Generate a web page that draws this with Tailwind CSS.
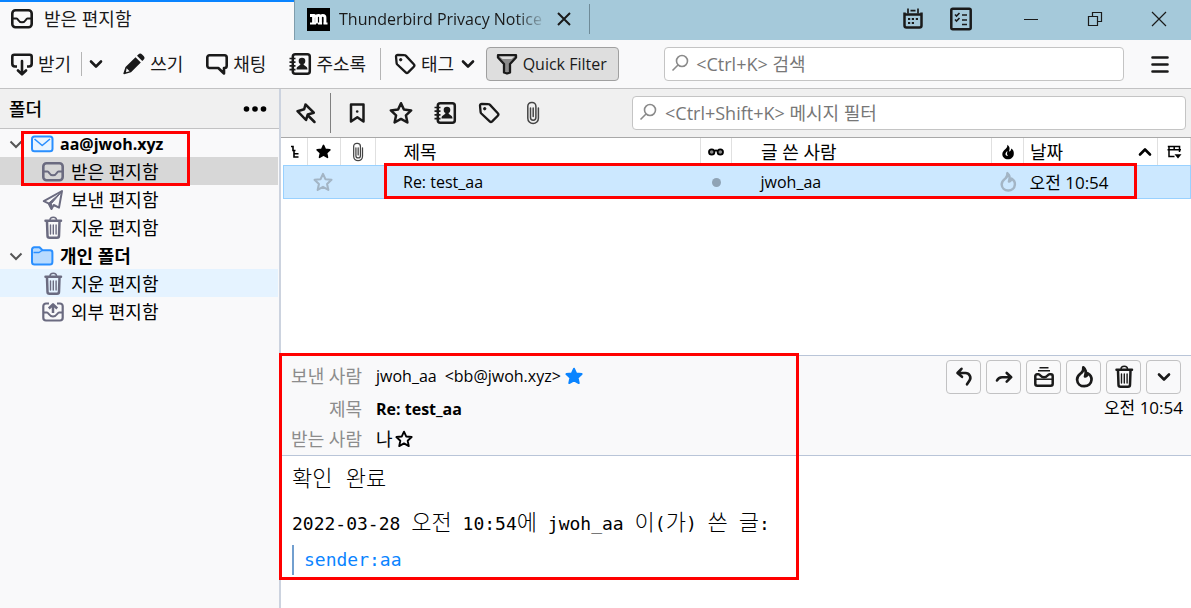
<!DOCTYPE html>
<html lang="ko">

<head>
	<title>받은 편지함</title>
	<meta charset="UTF-8" />
	<meta name="viewport" content="width=device-width, initial-scale=1" />
	<script src="https://cdn.jsdelivr.net/npm/@tailwindcss/browser@4"></script>
</head>

<body class="min-h-screen flex flex-col bg-white text-black text-lg leading-6 font-['Open_Sans','Noto_Sans_CJK_KR',sans-serif]">

	<!-- Icon sprite -->
	<svg class="hidden" aria-hidden="true">
		<symbol id="inbox" viewBox="0 0 24 24" fill="none" stroke="currentColor" stroke-width="2.6" stroke-linejoin="round">
			<rect x="2.3" y="3.3" width="19.4" height="16.9" rx="3.2" />
			<path d="M2.5 11.500h4c2 0 1.500 3.800 5.500 3.800s3.500-3.800 5.500-3.800h4" stroke-width="2" />
		</symbol>
		<symbol id="download" viewBox="0 0 24 24" fill="none" stroke="currentColor" stroke-width="2.6" stroke-linejoin="round" stroke-linecap="round">
			<path d="M7 14.500H5a2.700 2.700 0 0 1-2.700-2.700V4.800a2 2 0 0 1 2-2h15.400a2 2 0 0 1 2 2v7a2.700 2.700 0 0 1-2.700 2.700h-2" stroke-linecap="butt" />
			<path d="M12 9v13M8 18.500l4 3.800 4-3.800" />
		</symbol>
		<symbol id="chevron" viewBox="0 0 16 16" fill="none" stroke="currentColor" stroke-width="2.600" stroke-linecap="round" stroke-linejoin="round">
			<path d="M3 5.500l5 5 5-5" />
		</symbol>
		<symbol id="twisty" viewBox="0 0 16 16" fill="none" stroke="currentColor" stroke-width="2">
			<path d="M2.500 5.500l5.500 5.500L13.500 5.500" />
		</symbol>
		<symbol id="pencil" viewBox="0 0 24 24" fill="currentColor">
			<path d="M13.500 5.200l5.300 5.300L9 20.300 2.200 22.200c-.6.100-1-.4-.8-.9L3.500 15z" />
			<path d="M15 3.700l1.300-1.200a2.700 2.700 0 0 1 3.800 0l1.500 1.500a2.700 2.700 0 0 1 0 3.800L20.300 9z" />
			<path d="M4.600 16.300l3 3-3.600 1z" fill="#f9f9fa" />
		</symbol>
		<symbol id="chat" viewBox="0 0 24 24" fill="none" stroke="currentColor" stroke-width="2.600" stroke-linejoin="round">
			<path d="M4.500 3.300h15a2.200 2.200 0 0 1 2.200 2.200v8.300a2.200 2.200 0 0 1-2.200 2.200H19v5.500L13.300 16H4.500a2.200 2.200 0 0 1-2.200-2.200V5.500a2.200 2.200 0 0 1 2.200-2.200z" />
		</symbol>
		<symbol id="book" viewBox="0 0 24 24" fill="none" stroke="currentColor">
			<rect x="4.800" y="2.300" width="17" height="19.400" rx="2.500" stroke-width="2.500" />
			<path d="M1.500 6.500h6M1.500 10.200h6M1.500 13.900h6M1.500 17.600h6" stroke-width="1.700" />
			<circle cx="14" cy="9" r="3.300" fill="currentColor" stroke="none" />
			<path d="M8.500 17.500c0-4 3.500-3 4-5.500h3c.5 2.500 4 1.500 4 5.500z" fill="currentColor" stroke="none" />
		</symbol>
		<symbol id="tag" viewBox="0 0 24 24" fill="none" stroke="currentColor" stroke-width="2.300" stroke-linejoin="round">
			<path d="M3 4.500A1.700 1.700 0 0 1 4.700 2.800l6.800.4c.6 0 1.100.3 1.500.7l7.800 8.300a1.800 1.800 0 0 1 0 2.500l-5.600 5.700a1.800 1.800 0 0 1-2.500 0l-8.400-7.900c-.4-.4-.7-.9-.7-1.500z" />
			<circle cx="7.700" cy="7.700" r="1.200" fill="currentColor" stroke-width="1" />
		</symbol>
		<symbol id="funnel" viewBox="0 0 24 24" stroke="currentColor" stroke-width="2.300" stroke-linejoin="round">
			<path d="M3 3.200h18v2.300L15 12v8.500L12 21.500 9 20.500V12L3 5.500z" fill="#8c8c8c" />
			<path d="M4.500 4.500h15L16.500 7h-9z" fill="#ddd" stroke="none" />
		</symbol>
		<symbol id="search" viewBox="0 0 20 20" fill="none" stroke="currentColor" stroke-width="1.600">
			<circle cx="11" cy="7" r="5.500" />
			<path d="M7 11L1.500 16.500" />
		</symbol>
		<symbol id="pin" viewBox="0 0 24 24" fill="none" stroke="currentColor" stroke-width="2.500" stroke-linejoin="round" stroke-linecap="round">
			<path d="M11.500 3.500l-1.300 4.700-6.700 2 8.500 8.800 1.800-5.500 6-1.800z" />
			<path d="M14 14.500l6.500 6.500" />
		</symbol>
		<symbol id="bookmark" viewBox="0 0 24 24" fill="none" stroke="currentColor" stroke-width="2.500" stroke-linejoin="round">
			<path d="M6 3.500h12.500v17l-6.200-4.300L6 20.500z" />
			<circle cx="12.200" cy="10.500" r="1.300" fill="currentColor" stroke="none" />
		</symbol>
		<symbol id="star" viewBox="0 0 24 24" stroke="currentColor" stroke-width="2.500" stroke-linejoin="round">
			<path d="M12 2.200l2.900 6.400 7.300.8-5.300 4.900 1.500 7.200L12 17.900l-6.400 3.600 1.500-7.200-5.300-4.900 7.300-.8z" />
		</symbol>
		<symbol id="clip" viewBox="0 0 24 24" fill="none" stroke="currentColor" stroke-width="1.500" stroke-linecap="round">
			<path d="M9.500 7v9.500a2.700 2.700 0 0 0 5.400 0V5.200a3.700 3.700 0 0 0-3.700-3.700h-.7a3.700 3.700 0 0 0-3.700 3.700v12a5.300 5.300 0 0 0 10.600 0V7" />
			<path d="M12.200 7v8.500" />
		</symbol>
		<symbol id="flame" viewBox="0 0 24 24" fill="none" stroke="currentColor" stroke-width="2.700" stroke-linejoin="round">
			<path d="M11.300 2.300c3.200 2.500 3.200 5.200 1.700 9.200 1.700-.5 2.600-1.600 2.800-3.200 2.800 1.600 3.900 4 3.700 6.500-.3 3.700-3.300 6.400-7.200 6.400-4 0-7-2.700-7.200-6.500-.1-3.700 1.900-4.700 4.200-6.700 1.900-1.700 2.400-3.400 2-5.700z" />
		</symbol>
		<symbol id="flame-solid" viewBox="0 0 16 16">
			<path fill="currentColor" d="M7.300.8c2.700 1.700 2.600 4 1.700 6.700 1.500-.2 2.300-1.400 2.200-3C13.300 5.500 14 7.500 13.800 10c-.2 3.200-2.600 5.300-5.800 5.300S2.300 13.200 2.300 10C2.300 7.500 4 6.500 5.500 5 7 3.500 7.500 2.500 7.300.8z" />
			<path fill="#fff" d="M7.500 7c-3 2-2.500 5 .5 5-1.500-1.500-1-3-.5-5z" />
		</symbol>
		<symbol id="trash" viewBox="0 0 24 24" fill="none" stroke="currentColor" stroke-linecap="round" stroke-linejoin="round">
			<path d="M4.500 4.700h15.500M6 5.500l.5 14.200a2 2 0 0 0 2 2h7.500a2 2 0 0 0 2-2L18.500 5.500" stroke-width="2.500" />
			<path d="M9 4c0-3.700 6.500-3.700 6.500 0" stroke-width="1.500" />
			<path d="M9.500 9v9M12.300 9v9M15.100 9v9" stroke-width="1.400" />
		</symbol>
		<symbol id="mail" viewBox="0 0 24 24" fill="none" stroke="currentColor" stroke-width="2" stroke-linejoin="round">
			<rect x="2" y="4.500" width="20.500" height="14.800" rx="2.500" fill="#eaf5ff" />
			<path d="M4.500 7l7.700 6.500L20 7" stroke-width="1.600" />
		</symbol>
		<symbol id="folder" viewBox="0 0 24 24" stroke="currentColor" stroke-width="2" stroke-linejoin="round">
			<path d="M2 5.500A2.200 2.200 0 0 1 4.200 3.300h5.300l3 3h7.700a2.200 2.200 0 0 1 2.200 2.200V18a2.500 2.500 0 0 1-2.500 2.500H4.500A2.500 2.500 0 0 1 2 18z" fill="#b8dbff" />
			<path d="M3.500 8.500h5.500l3-2" fill="none" stroke-width="1.500" />
		</symbol>
		<symbol id="plane" viewBox="0 0 24 24" fill="none" stroke="currentColor" stroke-width="2" stroke-linejoin="round">
			<path d="M21 3L2.800 13.200l4.700 2.100L10.500 21l2.200-4 5.300 2.600z" />
			<path d="M20.500 4L7.500 15.300 10.500 21V15.500z" fill="currentColor" stroke-width="1" />
		</symbol>
		<symbol id="outbox" viewBox="0 0 24 24" fill="none" stroke="currentColor" stroke-width="2.200" stroke-linejoin="round">
			<path d="M8 3.500H5A2.700 2.700 0 0 0 2.300 6.200v11.600A2.700 2.700 0 0 0 5 20.500h14a2.700 2.700 0 0 0 2.700-2.700V6.200A2.700 2.700 0 0 0 19 3.500h-3" />
			<path d="M2.500 12.500h3.500c1.700 0 2 4 6 4s4.300-4 6-4h3.500" stroke-width="1.800" />
			<path d="M12 13V5.500M7.800 8.500L12 4.300l4.200 4.200" stroke-width="2.500" />
		</symbol>
		<symbol id="calendar" viewBox="0 0 24 24" fill="none" stroke="currentColor" stroke-width="2.500">
			<path d="M3.500 5.500v13a2 2 0 0 0 2 2h13a2 2 0 0 0 2-2v-13M3 7.500h18" />
			<path d="M7 1.500v5M17 1.500v5M9.500 3.700h5" stroke-width="1.700" />
			<path d="M10.800 12h2.200M14.800 12h2.200M7 16h2.200M10.800 16h2.200M7 12h2.200" stroke-width="2.200" />
		</symbol>
		<symbol id="tasks" viewBox="0 0 24 24" fill="none" stroke="currentColor" stroke-width="2.500">
			<rect x="2.300" y="1.800" width="19.400" height="20.400" rx="1.500" />
			<path d="M6 7.500l1.500 1.500 3-3M6 12.500l1.500 1.500 3-3M13 8h5M13 13h5M13 17.500h5" stroke-width="1.600" />
		</symbol>
		<symbol id="reply" viewBox="0 0 24 24" fill="none" stroke="currentColor" stroke-width="2.600" stroke-linejoin="round" stroke-linecap="round">
			<path d="M9.500 3.800L5.500 8 10 11.800M6 8h7.500a4.800 4.800 0 0 1 4 7.500L15 19.300" />
		</symbol>
		<symbol id="forward" viewBox="0 0 24 24" fill="none" stroke="currentColor" stroke-width="2.600" stroke-linejoin="round" stroke-linecap="round">
			<path d="M14.700 8l4.500 4.200-4.500 4.500M18.500 12.200H10c-2.500 0-4 1.200-5 3.300" />
		</symbol>
		<symbol id="archive" viewBox="0 0 24 24" fill="none" stroke="currentColor" stroke-width="2.500" stroke-linejoin="round">
			<path d="M3.300 11a1.700 1.700 0 0 1 1.700-1.700h1.500c2 0 2 3 5.500 3s3.500-3 5.500-3H19A1.700 1.700 0 0 1 20.700 11v7.700a2 2 0 0 1-2 2H5.300a2 2 0 0 1-2-2z" />
			<path d="M4 14.200h16" stroke-width="1.500" />
			<path d="M7.500 2.800h9M6 5.800h12" stroke-width="1.500" />
		</symbol>
		<symbol id="thread" viewBox="0 0 16 16" fill="none" stroke="currentColor" stroke-width="1.600">
			<path d="M4 2.500h2v4h2.500M7 6.500v6.500h4.500M7 9.800h4.500" />
		</symbol>
		<symbol id="glasses" viewBox="0 0 18 12" stroke="currentColor" stroke-width="1.800">
			<circle cx="4.700" cy="6" r="2.700" fill="#888" />
			<circle cx="13.300" cy="6" r="2.700" fill="#888" />
			<path d="M7.500 5q1.500-1.200 3 0" fill="none" />
		</symbol>
		<symbol id="columns" viewBox="0 0 16 16" fill="none" stroke="currentColor" stroke-width="1.500">
			<path d="M8.500 12.500H3V2.500h10.500v5.500M1.500 5.800h13.500M8.200 2.500v3.500M1.800 2.500h12.500" />
			<path d="M8.500 10.300h7L12 14.500z" fill="currentColor" stroke="none" />
		</symbol>
	</svg>

	<!-- Tabs -->
	<header class="flex items-center h-10 bg-[#a5c9da] text-[#1a1a1a]">
		<button class="flex items-center self-stretch gap-[10px] w-[294px] pl-[10px] pb-1 bg-[#f9f9fa] border-t-2 border-[#0a84ff] shadow-[0_1px_0_#f9f9fa]">
			<svg class="size-6"><use href="#inbox" /></svg>
			<span>받은 편지함</span>
		</button>
		<div class="flex items-center self-stretch flex-1 border-l border-b border-[#7f9dac] -mb-px pb-0.5">
			<div class="flex items-center gap-[9px] w-[295px] pl-3 h-[30px] border-r border-[#6f8b98]">
				<svg class="size-[23px] bg-black" viewBox="0 0 23 23" fill="none" stroke="#fff" stroke-width="2.800" aria-hidden="true">
					<path d="M3 7.500h3.500v8M9.500 15.500V9.500c0-3 4-2.500 4 0v6M13.500 9.500c0-3 4.500-2.500 4.500 0v6" />
					<path d="M6.500 9.500c.5-1.500 2.500-2 3.500-1" />
					<path d="M3 15.500h6M11 15.500h4M16.500 15.500h4" stroke-width="2" />
				</svg>
				<a href="#" class="w-[208px] overflow-hidden whitespace-nowrap text-base leading-6 mask-r-from-85%">Thunderbird Privacy Notice</a>
				<button aria-label="탭 닫기"><svg class="size-4" viewBox="0 0 16 16" stroke="currentColor" stroke-width="2"><path d="M2 2l12 12M14 2L2 14" /></svg></button>
			</div>
			<div class="flex items-center ml-auto">
				<button aria-label="일정" class="w-12 flex justify-center"><svg class="size-6"><use href="#calendar" /></svg></button>
				<button aria-label="할 일" class="w-12 flex justify-center"><svg class="size-6"><use href="#tasks" /></svg></button>
				<button aria-label="최소화" class="w-16 ml-3.5 flex justify-center"><svg class="size-4" viewBox="0 0 16 16" stroke="currentColor"><path d="M1 8.500h14" /></svg></button>
				<button aria-label="이전 크기로" class="w-16 flex justify-center"><svg class="size-4" viewBox="0 0 16 16" fill="none" stroke="currentColor" stroke-width="1.200"><path d="M1.500 5.500h9v9h-9zM5.500 5.500v-4h9v9h-4" /></svg></button>
				<button aria-label="닫기" class="w-16 flex justify-center"><svg class="size-4" viewBox="0 0 16 16" stroke="currentColor" stroke-width="1.200"><path d="M1 1l14 14M15 1L1 15" /></svg></button>
			</div>
		</div>
	</header>

	<!-- Main toolbar -->
	<nav class="flex items-center h-[49px] pl-[10px] pr-[19px] bg-[#f9f9fa] border-b border-[#c2c2c3] text-[#1a1a1a]">
		<button class="flex items-center gap-1"><svg class="size-6"><use href="#download" /></svg>받기</button>
		<span class="w-px h-6 ml-[10px] bg-[#b5b5b5]"></span>
		<button aria-label="받기 메뉴" class="ml-1.5"><svg class="size-4"><use href="#chevron" /></svg></button>
		<button class="ml-[18px] flex items-center gap-1"><svg class="size-6"><use href="#pencil" /></svg>쓰기</button>
		<button class="ml-[22px] flex items-center gap-1"><svg class="size-6"><use href="#chat" /></svg>채팅</button>
		<button class="ml-[22px] flex items-center gap-1"><svg class="size-6"><use href="#book" /></svg>주소록</button>
		<span class="w-px h-8 ml-[14px] bg-[#b5b5b5]"></span>
		<button class="ml-3 flex items-center gap-1"><svg class="size-6"><use href="#tag" /></svg>태그<svg class="size-4 ml-0.5"><use href="#chevron" /></svg></button>
		<button aria-pressed="true" class="flex items-center justify-center gap-1 shrink-0 w-[133px] h-[34px] ml-[10px] pr-1 rounded border border-[#a0a0a0] bg-[#dedede] text-base"><svg class="size-6"><use href="#funnel" /></svg>Quick Filter</button>
		<label class="flex items-center flex-1 h-[34px] ml-[45px] pl-1.5 gap-[5px] rounded border border-[#c4c4c4] bg-white text-[#8a8a8a]">
			<svg class="size-5"><use href="#search" /></svg>
			<input type="search" aria-label="검색" placeholder="<Ctrl+K> 검색" class="flex-1 min-w-0 outline-none placeholder:text-[#777]" />
		</label>
		<button aria-label="메뉴" class="ml-6"><svg class="size-6" viewBox="0 0 24 24" stroke="currentColor" stroke-width="2.600" stroke-linecap="round"><path d="M4.500 5.500h15M4.500 12.500h15M4.500 19.500h15" /></svg></button>
	</nav>

	<div class="flex flex-1">

		<!-- Folder pane -->
		<aside class="relative flex flex-col shrink-0 w-[281px] bg-[#f9f9fa] border-r-2 border-[#ccd3df]">
			<div class="flex items-center justify-between h-10 pl-[9px] pr-3 bg-[#f0f0f0] border-b border-[#c2c2c3]">
				<h1 class="font-medium">폴더</h1>
				<button aria-label="폴더 창 옵션"><svg class="w-6 h-2" viewBox="0 0 24 8" fill="currentColor"><circle cx="3.500" cy="4" r="2.800" /><circle cx="12" cy="4" r="2.800" /><circle cx="20.500" cy="4" r="2.800" /></svg></button>
			</div>
			<ul class="*:flex *:items-center *:h-7 *:gap-1.5 *:pt-0.5 pr-px">
				<li class="pl-2 font-bold">
					<svg class="size-4 text-[#555]"><use href="#twisty" /></svg>
					<svg class="size-6 text-[#2a8fff]"><use href="#mail" /></svg>
					<a href="#" class="text-base">aa@jwoh.xyz</a>
				</li>
				<li class="pl-[41px] bg-[#d7d7d7]">
					<svg class="size-6 text-[#6b6b80]"><use href="#inbox" /></svg><a href="#">받은 편지함</a>
				</li>
				<li class="pl-[41px]">
					<svg class="size-6 text-[#6b6b80]"><use href="#plane" /></svg><a href="#">보낸 편지함</a>
				</li>
				<li class="pl-[41px]">
					<svg class="size-6 text-[#6b6b80]"><use href="#trash" /></svg><a href="#">지운 편지함</a>
				</li>
				<li class="pl-2 font-bold">
					<svg class="size-4 text-[#555]"><use href="#twisty" /></svg>
					<svg class="size-6 text-[#2a8fff]"><use href="#folder" /></svg>
					<a href="#">개인 폴더</a>
				</li>
				<li class="pl-[41px] bg-[#e5f3ff]">
					<svg class="size-6 text-[#6b6b80]"><use href="#trash" /></svg><a href="#">지운 편지함</a>
				</li>
				<li class="pl-[41px]">
					<svg class="size-6 text-[#6b6b80]"><use href="#outbox" /></svg><a href="#">외부 편지함</a>
				</li>
			</ul>
			<!-- callout -->
			<div class="absolute left-[21px] top-[42px] w-[169px] h-[55px] border-3 border-[#f00] pointer-events-none"></div>
		</aside>

		<main class="flex flex-col flex-1 min-w-0">

			<!-- Quick filter bar -->
			<div class="flex items-center h-[49px] pr-[5px] bg-[#f0f0f0] border-b border-[#a8a8a8] text-[#1a1a1a]">
				<button aria-label="필터 유지" class="w-[49px] flex justify-center"><svg class="size-6"><use href="#pin" /></svg></button>
				<span class="w-px h-10 mr-1 bg-[#808080]"></span>
				<button aria-label="읽지 않음" class="w-11 flex justify-center"><svg class="size-6"><use href="#bookmark" /></svg></button>
				<button aria-label="별표" class="w-11 flex justify-center"><svg class="size-6 fill-none"><use href="#star" /></svg></button>
				<button aria-label="연락처" class="w-11 flex justify-center"><svg class="size-6"><use href="#book" /></svg></button>
				<button aria-label="태그" class="w-11 flex justify-center"><svg class="size-6"><use href="#tag" /></svg></button>
				<button aria-label="첨부 파일" class="w-11 flex justify-center text-[#444]"><svg class="size-6"><use href="#clip" /></svg></button>
				<label class="flex items-center flex-1 h-[34px] ml-[77px] pl-1.5 gap-[6px] rounded border border-[#c4c4c4] bg-white text-[#8a8a8a]">
					<svg class="size-5"><use href="#search" /></svg>
					<input type="search" aria-label="메시지 필터" placeholder="<Ctrl+Shift+K> 메시지 필터" class="flex-1 min-w-0 outline-none placeholder:text-[#777]" />
				</label>
			</div>

			<!-- Message list -->
			<div class="relative h-[217px] pl-0.5">
				<table class="w-full table-fixed border-collapse">
					<colgroup>
						<col class="w-6" />
						<col class="w-[33px]" />
						<col class="w-[35px]" />
						<col />
						<col class="w-[31px]" />
						<col class="w-[260px]" />
						<col class="w-8" />
						<col class="w-[134px]" />
						<col class="w-[33px]" />
					</colgroup>
					<thead>
						<tr class="h-[27px] *:border-r *:border-[#e0e0e0] *:p-0 *:font-normal">
							<th aria-label="글타래"><svg class="size-4 mx-auto"><use href="#thread" /></svg></th>
							<th aria-label="별표"><svg class="size-[15px] mx-auto fill-current"><use href="#star" /></svg></th>
							<th aria-label="첨부" class="text-[#444]"><svg class="size-5 mx-auto"><use href="#clip" /></svg></th>
							<th class="text-left"><span class="pl-7">제목</span></th>
							<th aria-label="읽음"><svg class="w-[18px] h-3 mx-auto"><use href="#glasses" /></svg></th>
							<th class="text-left"><span class="pl-[29px]">글 쓴 사람</span></th>
							<th aria-label="스팸"><svg class="size-4 mx-auto"><use href="#flame-solid" /></svg></th>
							<th><div class="flex items-center justify-between pl-1.5 pr-1">날짜<svg class="size-4 rotate-180"><use href="#chevron" /></svg></div></th>
							<th><button aria-label="표시할 열" class="block mx-auto"><svg class="size-4"><use href="#columns" /></svg></button></th>
						</tr>
					</thead>
					<tbody>
						<tr class="h-[34px] bg-[#cce8ff] outline outline-[#99d1ff] -outline-offset-1 *:p-0">
							<td></td>
							<td><svg class="size-5 ml-1.5 fill-none text-[#a3b5c5]"><use href="#star" /></svg></td>
							<td></td>
							<td class="text-base"><span class="pl-7">Re: test_aa</span></td>
							<td><span class="block size-[9px] mx-auto rounded-full bg-[#8fa3b5]"></span></td>
							<td class="text-base"><span class="pl-[29px]">jwoh_aa</span></td>
							<td><svg class="size-[22px] mx-auto text-[#a3b5c5]"><use href="#flame" /></svg></td>
							<td><span class="pl-1.5 text-[17px]">오전 10:54</span></td>
							<td></td>
						</tr>
					</tbody>
				</table>
				<!-- callout -->
				<div class="absolute left-[103px] right-[54px] top-[25px] h-9 border-3 border-[#f00] pointer-events-none"></div>
			</div>

			<!-- Message pane -->
			<article class="relative flex-1">
				<div class="flex justify-between h-[101px] pr-2 bg-[#f9f9fa] border-y border-[#b9c5d8]">
					<dl class="grid grid-cols-[81px_1fr] grid-rows-[36px_30px_30px] items-center gap-x-[14px] pt-0.5">
						<dt class="text-right text-[#8c8c8c]">보낸 사람</dt>
						<dd class="flex items-center text-base"><span>jwoh_aa</span><span class="ml-2">&lt;bb@jwoh.xyz&gt;</span><button aria-label="주소록 편집" class="ml-1"><svg class="block size-[18px] fill-current text-[#0a84ff]"><use href="#star" /></svg></button></dd>
						<dt class="text-right text-[#8c8c8c]">제목</dt>
						<dd class="text-base font-bold">Re: test_aa</dd>
						<dt class="text-right text-[#8c8c8c]">받는 사람</dt>
						<dd class="flex items-center gap-0.5">나<button aria-label="주소록에 추가"><svg class="block size-[18px] fill-none"><use href="#star" /></svg></button></dd>
					</dl>
					<div class="flex flex-col items-end gap-0.5 pt-1">
						<div class="flex gap-[5px] pr-0.5 text-[#1a1a1a] *:flex *:items-center *:justify-center *:w-[35px] *:h-[34px] *:rounded *:border *:border-[#c2c2c3]">
							<button aria-label="답장"><svg class="size-6"><use href="#reply" /></svg></button>
							<button aria-label="전달"><svg class="size-6"><use href="#forward" /></svg></button>
							<button aria-label="보관"><svg class="size-6"><use href="#archive" /></svg></button>
							<button aria-label="스팸"><svg class="size-6"><use href="#flame" /></svg></button>
							<button aria-label="삭제"><svg class="size-6"><use href="#trash" /></svg></button>
							<button aria-label="더 보기"><svg class="size-4"><use href="#chevron" /></svg></button>
						</div>
						<time class="text-[17px]">오전 10:54</time>
					</div>
				</div>
				<div class="flex flex-col pl-[11px] pt-2 font-['DejaVu_Sans_Mono','Noto_Sans_CJK_KR',monospace]">
					<p class="text-[22px] leading-[30px] font-light">확인 완료</p>
					<p class="mt-3.5 leading-[30px]">2022-03-28 <span class="text-[22px] font-light">오전</span> 10:54<span class="text-[22px] font-light">에</span> jwoh_aa <span class="text-[22px] font-light">이</span>(<span class="text-[22px] font-light">가</span>) <span class="text-[22px] font-light">쓴</span> <span class="text-[22px] font-light">글</span>:</p>
					<blockquote class="mt-1.5 pl-[10px] leading-[30px] border-l-2 border-[#729fcf] text-[#0a84ff]">sender:aa</blockquote>
				</div>
				<!-- callout -->
				<div class="absolute -left-0.5 -top-0.5 w-[520px] h-[227px] border-3 border-[#f00] pointer-events-none"></div>
			</article>
		</main>
	</div>

</body>

</html>
